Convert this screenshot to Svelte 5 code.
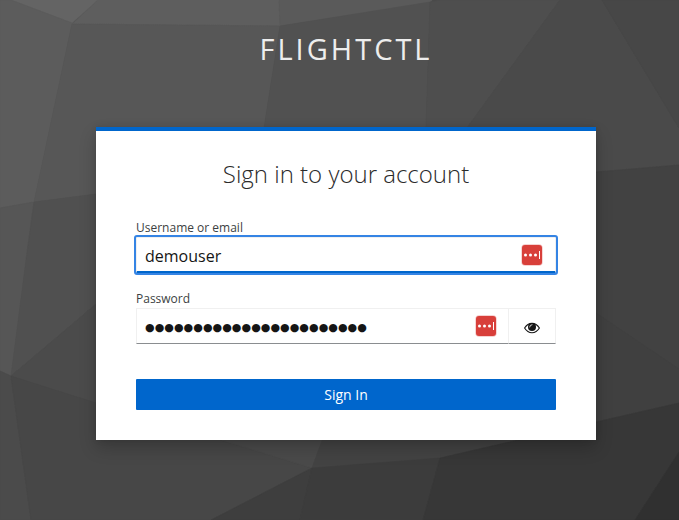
<script>
  let username = $state('demouser');
  const masked = '●'.repeat(23);

  // Facets of the low-poly backdrop: [fill, points]
  const facets = [
    ['#646464', '11,0 98,0 72,23'],
    ['#5c5c5c', '0,0 11,0 72,23 34,202 0,208'],
    ['#5e5e5e', '98,0 279,0 280,26 72,24'],
    ['#5a5a5a', '279,0 432,0 430,3 280,26'],
    ['#575757', '72,24 280,26 264,128 264,194 96,194 34,202'],
    ['#515151', '280,26 430,2 426,128 426,200 250,200 264,128'],
    ['#4e4e4e', '430,2 440,0 560,0 467,128 426,200 426,128'],
    ['#4a4a4a', '560,0 602,0 679,128 679,165 596,172 400,220'],
    ['#474747', '602,0 679,0 679,128'],
    ['#424242', '679,165 596,172 420,220 440,460 596,422 679,403'],
    ['#404040', '596,313 679,369 679,403 596,422'],
    ['#565656', '0,208 34,202 26,260 11,376 0,371'],
    ['#505050', '34,202 96,194 160,250 11,376 26,260'],
    ['#4b4b4b', '11,376 160,250 220,440 96,403'],
    ['#4b4b4b', '0,371 11,376 31,520 0,520'],
    ['#474747', '11,376 96,403 220,440 312,468 211,520 31,520'],
    ['#4a4a4a', '215,438 323,438 312,468'],
    ['#434343', '323,438 440,438 440,458 312,468'],
    ['#3e3e3e', '312,468 300,520 211,520'],
    ['#3c3c3c', '312,468 440,458 423,520 300,520'],
    ['#373737', '440,458 596,422 679,403 679,452 635,520 423,520'],
    ['#303030', '679,452 679,520 635,520']
  ];
</script>

{#snippet vaultIcon()}
  <svg class="vault" width="22" height="22" viewBox="0 0 22 22" aria-hidden="true">
    <rect x=".3" y=".3" width="21.4" height="21.4" rx="3.8" fill="#d63f3a" opacity=".3" />
    <rect x="1" y="1" width="20" height="20" rx="3" fill="#d83f3a" />
    <circle cx="4.5" cy="11" r="1.5" fill="#fff" />
    <circle cx="9.5" cy="11" r="1.5" fill="#fff" />
    <circle cx="14.5" cy="11" r="1.5" fill="#fff" />
    <rect x="18" y="7" width="1" height="8" fill="#fff" />
  </svg>
{/snippet}

<div class="page">
  <svg class="backdrop" viewBox="0 0 679 520" aria-hidden="true">
    {#each facets as [fill, points]}
      <polygon {fill} {points} stroke={fill} stroke-width=".6" />
    {/each}
  </svg>

  <header>FLIGHTCTL</header>

  <main>
    <h1>Sign in to your account</h1>
    <form onsubmit={(e) => e.preventDefault()}>
      <label for="username">Username or email</label>
      <div class="field focused">
        <input id="username" type="text" bind:value={username} />
        {@render vaultIcon()}
      </div>

      <label class="second" for="password">Password</label>
      <div class="group">
        <div class="field" id="password">
          <span class="mask">{masked}</span>
          {@render vaultIcon()}
        </div>
        <button class="reveal" type="button" aria-label="Show password">
          <svg width="16" height="12" viewBox="0 0 16 12">
            <path d="M.6 6Q3.5 1.3 8 1.3T15.4 6Q12.5 10.7 8 10.7T.6 6Z" fill="none" stroke="#151515" stroke-width="1.15" />
            <circle cx="8" cy="5" r="4" fill="#151515" />
            <path d="M5.7 5Q5.7 2.8 8 2.7" fill="none" stroke="#fff" stroke-width=".8" stroke-linecap="round" />
          </svg>
        </button>
      </div>

      <button class="submit" type="submit">Sign In</button>
    </form>
  </main>
</div>

<style>
  .page {
    position: relative;
    width: 679px;
    height: 520px;
    overflow: hidden;
    background: #4a4a4a;
    font-family: "Open Sans", "Noto Sans", sans-serif;
  }
  .backdrop {
    position: absolute;
    inset: 0;
    width: 100%;
    height: 100%;
  }
  header {
    position: relative;
    box-sizing: border-box;
    height: 127px;
    padding: 29px 0 0 13px;
    text-align: center;
    font-size: 29px;
    line-height: 40px;
    letter-spacing: 3px;
    color: #ededed;
  }
  main {
    position: relative;
    box-sizing: border-box;
    width: 500px;
    height: 313px;
    margin-left: 96px;
    padding: 0 40px;
    border-top: 4px solid #06c;
    background: #fff;
    box-shadow: 0 8px 16px rgba(3, 3, 3, 0.2), 0 0 6px rgba(3, 3, 3, 0.1);
  }
  h1 {
    margin: 0;
    padding-top: 27px;
    text-align: center;
    font-size: 24px;
    font-weight: 300;
    line-height: 32px;
    color: #2b2b2b;
  }
  form {
    display: flex;
    flex-direction: column;
    padding-top: 29px;
  }
  label {
    height: 18px;
    font-size: 12px;
    line-height: 18px;
    color: #3c3f42;
  }
  .second {
    margin-top: 17px;
  }
  .field {
    display: flex;
    align-items: center;
    justify-content: space-between;
    box-sizing: border-box;
    height: 36px;
    padding: 0 12px 0 8px;
    border: 1px solid #f0f0f0;
    border-bottom-color: #8a8d90;
    background: #fff;
    font-size: 16px;
    color: #151515;
  }
  .focused {
    border-bottom: 2px solid #06c;
    outline: 2px solid #3584e4;
    outline-offset: 0;
    border-radius: 1px;
  }
  input {
    flex: 1;
    min-width: 0;
    padding: 3px 0 0;
    border: 0;
    outline: 0;
    background: transparent;
    font: inherit;
    line-height: 24px;
    color: inherit;
  }
  .vault {
    flex: none;
    display: block;
  }
  .group {
    display: flex;
  }
  .group .field {
    flex: 1;
    border-right: 0;
    padding-right: 11px;
  }
  .mask {
    padding-top: 4px;
    font-family: "DejaVu Sans", sans-serif;
    font-size: 11px;
    line-height: 24px;
    letter-spacing: 0.05px;
    white-space: nowrap;
  }
  .reveal {
    display: flex;
    align-items: center;
    justify-content: center;
    box-sizing: border-box;
    width: 48px;
    height: 36px;
    padding: 3px 0 0;
    border: 1px solid #f0f0f0;
    border-bottom-color: #8a8d90;
    background: #fff;
  }
  .submit {
    height: 31px;
    margin-top: 35px;
    padding: 0;
    border: 0;
    border-radius: 1px;
    background: #06c;
    font: 14px/31px "Open Sans", "Noto Sans", sans-serif;
    color: #fff;
  }
</style>
